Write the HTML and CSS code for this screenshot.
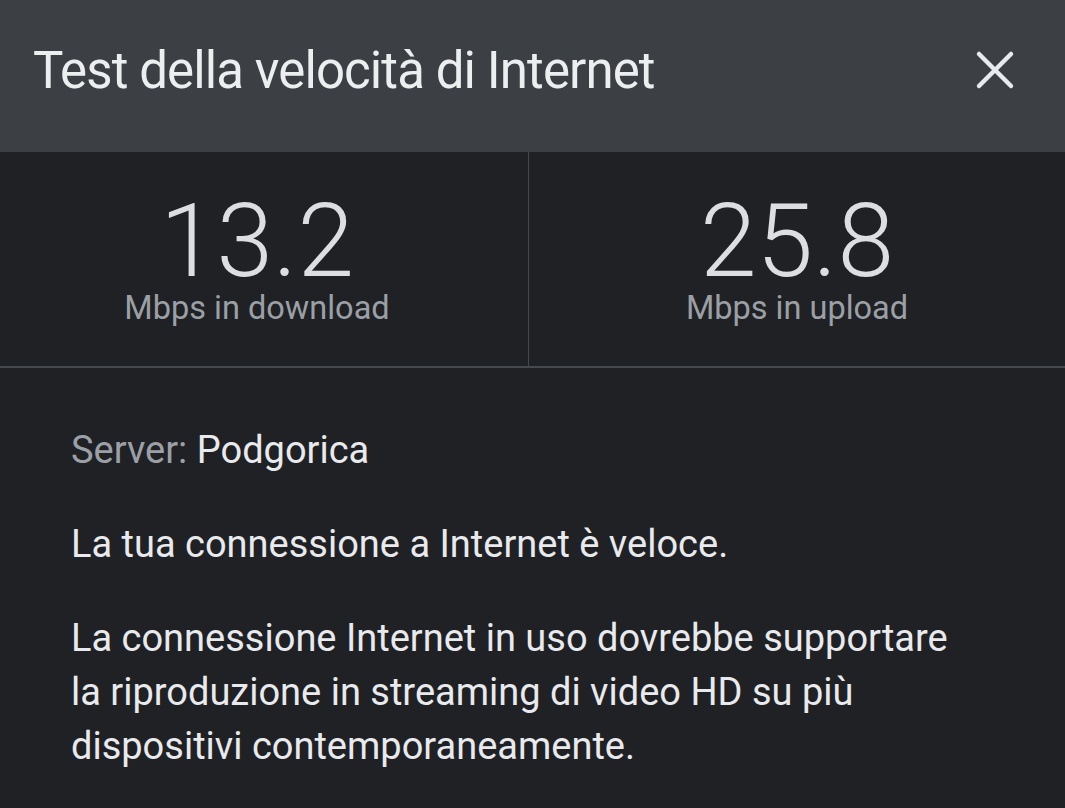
FILE: index.html
```html
<!DOCTYPE html>
<html lang="it">
  <head>
    <meta charset="UTF-8" />
    <meta name="viewport" content="width=device-width, initial-scale=1.0" />
    <title>Test della velocità di Internet</title>
    <link rel="stylesheet" href="styles.css">
  </head>
  <body>
    <div class="dialog">
      <div class="header">
        <h1>Test della velocità di Internet</h1>
        <button class="close" aria-label="Chiudi">
          <svg width="40" height="40" viewBox="0 0 40 40">
            <path d="M4 4 L36 36 M36 4 L4 36" stroke="#e8eaed" stroke-width="4.5" stroke-linecap="round" fill="none" />
          </svg>
        </button>
      </div>

      <div class="stats">
        <div class="stat">
          <div class="value">13.2</div>
          <div class="unit">Mbps in download</div>
        </div>
        <div class="stat">
          <div class="value">25.8</div>
          <div class="unit">Mbps in upload</div>
        </div>
      </div>

      <div class="details">
        <p><span class="label">Server:</span> Podgorica</p>
        <p>La tua connessione a Internet è veloce.</p>
        <p>La connessione Internet in uso dovrebbe supportare la riproduzione in streaming di video HD su più dispositivi contemporaneamente.</p>
      </div>
    </div>
  </body>
</html>
```

FILE: styles.css
```css
body {
  margin: 0;
  padding: 0;
  background-color: #202124;
  color: #e8eaed;
  font-family: Roboto, "Noto Sans", sans-serif;
}

.dialog {
  width: 1065px;
  height: 808px;
  overflow: hidden;
}

.header {
  display: flex;
  align-items: center;
  justify-content: space-between;
  height: 152px;
  padding: 0 50px 0 33px;
  box-sizing: border-box;
  background-color: #3c3f43;
}

h1 {
  margin: 0 0 12px 0;
  font-size: 51px;
  font-weight: 400;
  letter-spacing: -0.9px;
  color: #eceef0;
}

.close {
  background: none;
  border: none;
  padding: 0;
  margin-bottom: 12px;
  cursor: pointer;
  display: flex;
}

.stats {
  display: grid;
  grid-template-columns: 529px 1fr;
  height: 216px;
  border-bottom: 2px solid #45484c;
  box-sizing: border-box;
}

.stat {
  display: flex;
  flex-direction: column;
  align-items: center;
  padding-top: 41px;
}

.stat:first-child {
  border-right: 1px solid #45484c;
  padding-right: 14px;
}

.value {
  font-size: 102px;
  font-weight: 300;
  line-height: 96px;
  color: #dcdee1;
}

.unit {
  font-size: 32.5px;
  line-height: 38px;
  color: #9aa0a6;
}

.details {
  padding: 55px 99px 0 71px;
}

.details p {
  margin: 0 0 40px 0;
  font-size: 38px;
  line-height: 54px;
}

.label {
  color: #9aa0a6;
}
```
